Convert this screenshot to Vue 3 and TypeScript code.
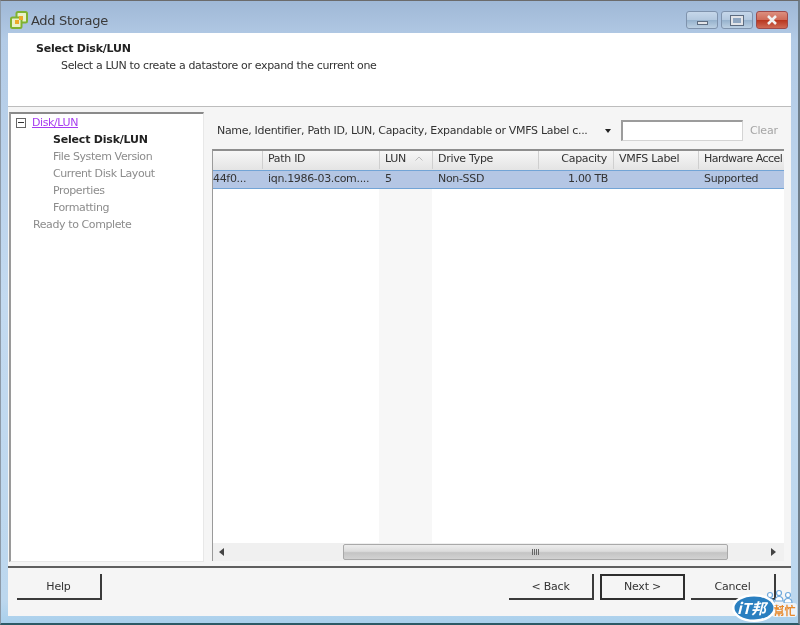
<script setup lang="ts">
interface Col { label: string; width: number; right?: boolean; sorted?: boolean; cell: string }
const columns: Col[] = [
  { label: '', width: 49, cell: '44f0...' },
  { label: 'Path ID', width: 117, cell: 'iqn.1986-03.com....' },
  { label: 'LUN', width: 53, sorted: true, cell: '5' },
  { label: 'Drive Type', width: 106, cell: 'Non-SSD' },
  { label: 'Capacity', width: 75, right: true, cell: '1.00 TB' },
  { label: 'VMFS Label', width: 85, cell: '' },
  { label: 'Hardware Accel', width: 86, cell: 'Supported' },
]
const gridTemplate = columns.map((c) => `${c.width}px`).join(' ')
const steps = ['File System Version', 'Current Disk Layout', 'Properties', 'Formatting']
</script>

<template>
  <div class="window">
    <header class="titlebar">
      <div class="title-left">
        <svg class="app-icon" width="18" height="18" viewBox="0 0 18 18">
          <rect x="6.500" y="1" width="10.500" height="10.500" rx="1.500" fill="#e9f2c8" stroke="#7fb230" stroke-width="2" />
          <rect x="1" y="6.500" width="10.500" height="10.500" rx="1.500" fill="#e9f2c8" stroke="#7fb230" stroke-width="2" />
          <rect x="9" y="5" width="4" height="4" fill="#eda92a" />
          <rect x="5" y="9" width="4" height="4" fill="#eda92a" />
        </svg>
        <span class="title-text">Add Storage</span>
      </div>
      <div class="controls">
        <div class="ctl"><span class="glyph-min"></span></div>
        <div class="ctl"><span class="glyph-max"></span></div>
        <div class="ctl close">
          <svg width="12" height="10" viewBox="0 0 12 10"><path d="M2 1l8 8M10 1l-8 8" stroke="#f2f2f2" stroke-width="2.500" /></svg>
        </div>
      </div>
    </header>

    <main class="client">
      <section class="banner">
        <div class="banner-title">Select Disk/LUN</div>
        <div class="banner-sub">Select a LUN to create a datastore or expand the current one</div>
      </section>

      <section class="body">
        <nav class="tree">
          <div class="tree-row">
            <span class="expander"></span>
            <span class="tree-link">Disk/LUN</span>
          </div>
          <div class="tree-step current">Select Disk/LUN</div>
          <div v-for="s in steps" :key="s" class="tree-step">{{ s }}</div>
          <div class="tree-root-muted">Ready to Complete</div>
        </nav>

        <div class="panel">
          <div class="filter">
            <span class="filter-label">Name, Identifier, Path ID, LUN, Capacity, Expandable or VMFS Label c...</span>
            <span class="caret"></span>
            <input class="filter-input" type="text" />
            <span class="clear">Clear</span>
          </div>

          <div class="table">
            <div class="thead" :style="{ gridTemplateColumns: gridTemplate }">
              <div v-for="c in columns" :key="c.label" class="th" :class="{ right: c.right }">
                <span class="th-label">{{ c.label }}</span>
                <svg v-if="c.sorted" class="sort" width="8" height="5" viewBox="0 0 8 5"><path d="M.5 4.500L4 1l3.500 3.500" fill="none" stroke="#bdbdbd" /></svg>
              </div>
            </div>
            <div class="row" :style="{ gridTemplateColumns: gridTemplate }">
              <div v-for="(c, i) in columns" :key="i" class="td" :class="{ right: c.right, first: i === 0 }">{{ c.cell }}</div>
            </div>
            <div class="rows-empty" :style="{ gridTemplateColumns: gridTemplate }">
              <div v-for="c in columns" :key="c.label" :class="{ stripe: c.sorted }"></div>
            </div>
            <div class="hscroll">
              <svg class="arrow" width="5" height="8" viewBox="0 0 5 8"><path d="M5 0v8L0 4z" fill="#444" /></svg>
              <div class="track">
                <div class="thumb">
                  <span class="grip"></span><span class="grip"></span><span class="grip"></span><span class="grip"></span>
                </div>
              </div>
              <svg class="arrow" width="5" height="8" viewBox="0 0 5 8"><path d="M0 0v8l5-4z" fill="#444" /></svg>
            </div>
          </div>
        </div>
      </section>

      <footer class="footer">
        <div class="btn">Help</div>
        <div class="footer-right">
          <div class="btn">&lt; Back</div>
          <div class="btn default">Next &gt;</div>
          <div class="btn">Cancel</div>
        </div>
      </footer>
    </main>

    <div class="badge">
      <svg width="68" height="35" viewBox="0 0 68 35">
        <g fill="#fff" stroke="#6fa9dc" stroke-width="1.200">
          <circle cx="40" cy="7" r="2.500" /><circle cx="49" cy="5" r="2.500" /><circle cx="58" cy="7" r="2.500" />
          <path d="M36 15c0-6 8-6 8 0zM45 13c0-6 8-6 8 0zM54 15c0-6 8-6 8 0z" />
        </g>
        <rect x="42" y="15" width="25" height="14" rx="3" fill="#eef3f8" />
        <ellipse cx="24" cy="20" rx="22" ry="14" fill="#fff" />
        <ellipse cx="24" cy="20" rx="19.500" ry="11.500" fill="#2a7fc0" />
        <text x="7" y="25.500" class="badge-main">iT邦</text>
        <text x="43.500" y="26.500" class="badge-sub">幫忙</text>
      </svg>
    </div>
  </div>
</template>

<style>
html, body { margin: 0; padding: 0; background: #9db9d9; }
</style>

<style scoped>
.window {
  position: relative;
  box-sizing: border-box;
  width: 800px;
  height: 625px;
  overflow: hidden;
  display: flex;
  flex-direction: column;
  padding: 0 7px 0 7px;
  background: linear-gradient(180deg, #9fb8d6 0, #b3cbe6 40px, #c3daf0 300px, #bcd7ee 600px, #a9d0ec 622px);
  border-top: 1px solid #6b6b6b;
  border-left: 1px solid #8d9aa8;
  border-right: 2px solid #6f7f8c;
  border-bottom: 2px solid #2d5a66;
  font-family: "DejaVu Sans", sans-serif;
  font-size: 11px;
  color: #333;
  filter: blur(0.35px);
}
.titlebar {
  height: 32px;
  display: flex;
  justify-content: space-between;
  margin: 0 3px 0 0;
  flex: none;
}
.title-left { display: flex; align-items: center; gap: 3px; padding: 9px 0 0 2px; height: 20px; }
.title-text { font-size: 13px; color: #3a3a3a; letter-spacing: -.3px; }
.controls { display: flex; gap: 3px; padding-top: 10px; height: 18px; }
.ctl {
  box-sizing: border-box;
  width: 32px;
  height: 18px;
  border: 1px solid #7f93ad;
  border-radius: 3px;
  background: linear-gradient(180deg, #c6d7ea 0, #b4c9df 48%, #96b2cd 52%, #bcd0e3 100%);
  display: flex;
  align-items: center;
  justify-content: center;
}
.ctl.close {
  border-color: #9e4a4a;
  background: linear-gradient(180deg, #dc8f7f 0, #cf6b58 48%, #b8361f 52%, #cf6a55 100%);
}
.glyph-min { width: 9px; height: 2px; margin-top: 5px; background: #e2e4e8; border: 1px solid #5d6c80; }
.glyph-max { width: 8px; height: 5px; border: 2px solid #e2e4e8; outline: 1px solid #5d6c80; background: #8fa6c0; }

.client {
  flex: 1;
  min-height: 0;
  display: flex;
  flex-direction: column;
  background: #f5f5f5;
  margin-bottom: 7px;
}
.banner {
  height: 74px;
  flex: none;
  box-sizing: border-box;
  background: #fff;
  border-bottom: 1px solid #bdbdbd;
  padding: 8px 0 0 28px;
}
.banner-title { font-weight: 700; color: #222; line-height: 16px; font-size: 11px; letter-spacing: -.2px; }
.banner-sub { padding-left: 25px; line-height: 17px; letter-spacing: -.35px; color: #333; }

.body { flex: 1; min-height: 0; display: flex; padding: 5px 0 0 0; }
.tree {
  box-sizing: border-box;
  width: 195px;
  height: 450px;
  margin-left: 1px;
  background: #fff;
  border-top: 2px solid #8a8a8a;
  border-left: 2px solid #9a9a9a;
  border-right: 1px solid #e8e8e8;
  border-bottom: 1px solid #e8e8e8;
}
.tree-row, .tree-step, .tree-root-muted { height: 17px; line-height: 17px; white-space: nowrap; letter-spacing: -.4px; }
.tree-row { display: flex; align-items: center; padding-left: 5px; }
.expander {
  position: relative;
  box-sizing: border-box;
  width: 10px;
  height: 10px;
  border: 1px solid #666;
  margin-right: 6px;
  background: #fff;
}
.expander::after { content: ""; position: absolute; left: 1px; right: 1px; top: 3px; height: 1px; background: #333; }
.tree-link { color: #a63cf0; text-decoration: underline; }
.tree-step { padding-left: 42px; color: #8c8c8c; }
.tree-step.current { color: #222; font-weight: 700; letter-spacing: -.2px; }
.tree-root-muted { padding-left: 22px; color: #8c8c8c; }

.panel { flex: 1; min-width: 0; padding: 8px 7px 0 8px; }
.filter { display: flex; align-items: center; height: 21px; margin-bottom: 8px; }
.filter-label { width: 391px; flex: none; padding-left: 5px; box-sizing: border-box; white-space: nowrap; overflow: hidden; letter-spacing: -.31px; color: #333; }
.caret { width: 0; height: 0; border: 3px solid transparent; border-top: 4px solid #222; border-bottom: 0; margin: 0 10px 0 2px; flex: none; }
.filter-input {
  box-sizing: border-box;
  width: 122px;
  height: 21px;
  flex: none;
  margin: 0 7px 0 0;
  padding: 0;
  background: #fff;
  border: 1px solid #d4d4d4;
  border-top: 2px solid #9c9c9c;
  border-left: 2px solid #9c9c9c;
  outline: none;
}
.clear { color: #a5a5a5; letter-spacing: -.2px; }

.table {
  box-sizing: border-box;
  width: 572px;
  height: 412px;
  display: flex;
  flex-direction: column;
  overflow: hidden;
  background: #fff;
  border-top: 2px solid #8e8e8e;
  border-left: 1px solid #9a9a9a;
}
.thead { display: grid; height: 19px; flex: none; background: linear-gradient(180deg, #f7f7f7, #e4e4e4); }
.th {
  box-sizing: border-box;
  display: flex;
  align-items: center;
  height: 18px;
  padding: 0 6px 3px 5px;
  border-left: 1px solid #cfcfcf;
  white-space: nowrap;
}
.th:first-child { border-left: 0; }
.th:last-child { padding-right: 0; }
.th:last-child .th-label { letter-spacing: -.55px; }
.th.right { justify-content: flex-end; }
.th-label { letter-spacing: -.3px; }
.sort { margin-left: 9px; }

.row {
  display: grid;
  flex: none;
  height: 19px;
  box-sizing: border-box;
  background: #b4c6e4;
  border-top: 1px solid #72a4d6;
  border-bottom: 1px solid #72a4d6;
}
.td { padding: 0 5px 0 6px; line-height: 15px; white-space: nowrap; overflow: hidden; letter-spacing: -.33px; }
.td.first { padding-left: 0; }
.td.right { text-align: right; }
.rows-empty { flex: 1; min-height: 0; display: grid; background: #fff; }
.stripe { background: #f7f7f7; }

.hscroll { flex: none; height: 18px; display: flex; align-items: center; background: #f0f0f0; padding: 0 8px 0 6px; }
.track { flex: 1; height: 16px; padding: 0 43px 0 119px; box-sizing: border-box; }
.thumb {
  box-sizing: border-box;
  height: 16px;
  border: 1px solid #a9a9a9;
  border-radius: 2px;
  background: linear-gradient(180deg, #ededed 0, #dcdcdc 45%, #c4c4c4 55%, #d2d2d2 100%);
  display: flex;
  align-items: center;
  justify-content: center;
  gap: 1px;
}
.grip { width: 1px; height: 6px; background: #666; }

.footer {
  flex: none;
  height: 50px;
  box-sizing: border-box;
  border-top: 2px solid #5f5f5f;
  display: flex;
  justify-content: space-between;
  padding: 6px 15px 0 9px;
}
.footer-right { display: flex; gap: 6px; }
.btn {
  box-sizing: border-box;
  width: 85px;
  height: 26px;
  line-height: 25px;
  text-align: center;
  background: #f5f5f5;
  border-right: 2px solid #3a3a3a;
  border-bottom: 2px solid #3a3a3a;
  letter-spacing: -.2px;
}
.btn.default { border: 2px solid #2e2e2e; line-height: 22px; }

.badge { position: absolute; left: 729px; top: 587px; width: 68px; height: 35px; }
.badge-main { font: italic 700 15px "Noto Sans CJK TC", "DejaVu Sans", sans-serif; fill: #fff; }
.badge-sub { font: 700 11px "Noto Sans CJK TC", sans-serif; fill: #e88a2e; }
</style>
